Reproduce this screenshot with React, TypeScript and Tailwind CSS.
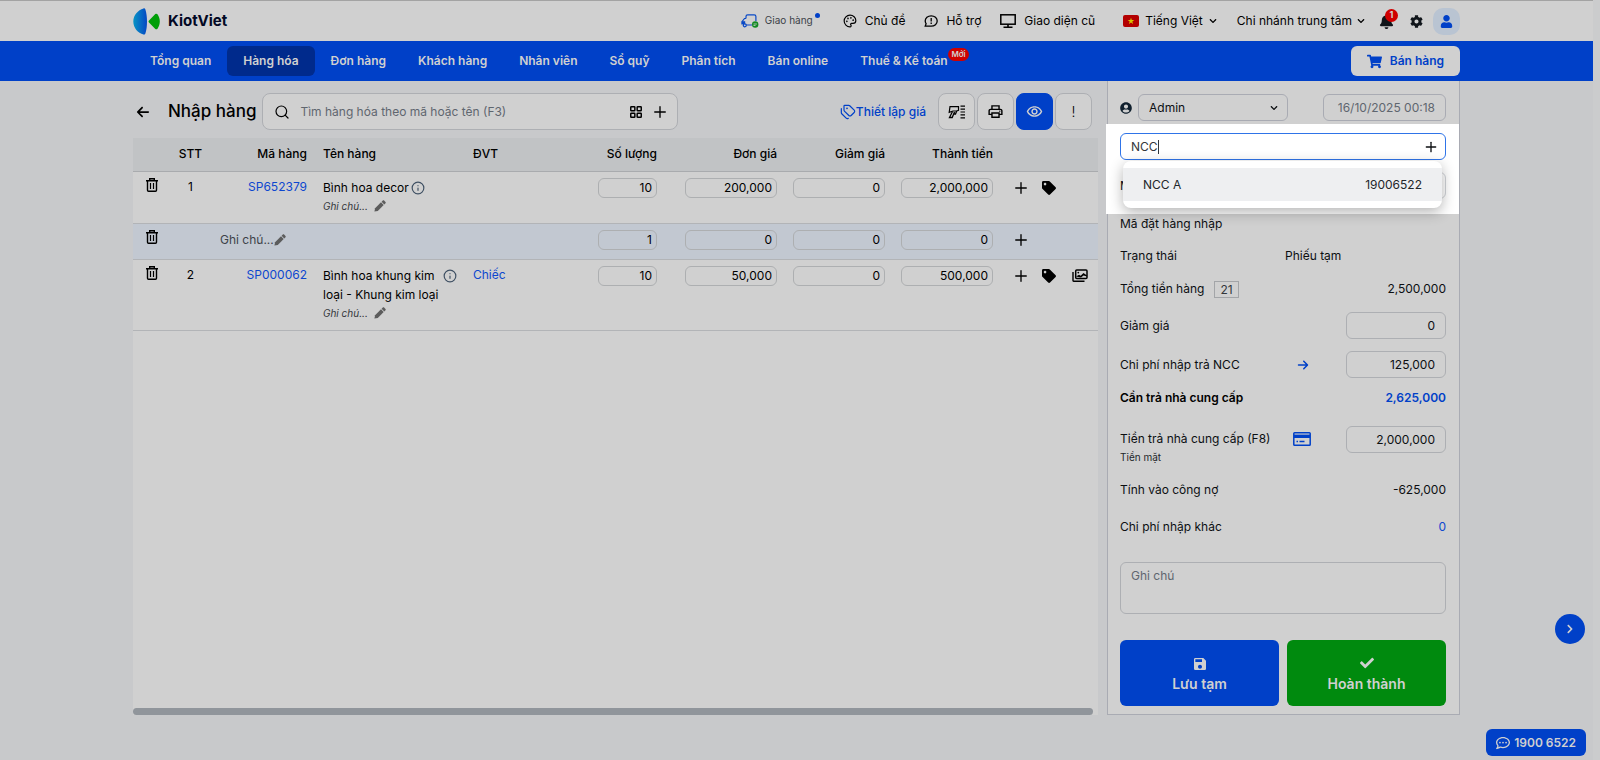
import type { ReactNode } from 'react';
import clsx from 'clsx';
import {
  FaBell,
  FaCheck,
  FaChevronDown,
  FaChevronRight,
  FaCog,
  FaShoppingCart,
  FaTag,
  FaUser,
  FaUserCircle,
} from 'react-icons/fa';
import { FaArrowLeft, FaArrowRight, FaRegCommentDots } from 'react-icons/fa6';
import { MdOutlinePrint, MdOutlineRemoveRedEye, MdSave } from 'react-icons/md';
import { Info, LayoutGrid, Palette, Plus, Search, Tags } from 'lucide-react';

const navItems = [
  { label: 'Tổng quan' },
  { label: 'Hàng hóa', active: true },
  { label: 'Đơn hàng' },
  { label: 'Khách hàng' },
  { label: 'Nhân viên' },
  { label: 'Sổ quỹ' },
  { label: 'Phân tích' },
  { label: 'Bán online' },
  { label: 'Thuế & Kế toán', badge: 'Mới' },
];

type Line = {
  index?: number;
  code?: string;
  name?: string;
  unit?: string;
  quantity: string;
  price: string;
  discount: string;
  total: string;
  hasImage?: boolean;
};

const lines: Line[] = [
  { index: 1, code: 'SP652379', name: 'Bình hoa decor', quantity: '10', price: '200,000', discount: '0', total: '2,000,000' },
  { quantity: '1', price: '0', discount: '0', total: '0' },
  {
    index: 2,
    code: 'SP000062',
    name: 'Bình hoa khung kim loại - Khung kim loại',
    unit: 'Chiếc',
    quantity: '10',
    price: '50,000',
    discount: '0',
    total: '500,000',
    hasImage: true,
  },
];

function Logo() {
  return (
    <a href="#" className="flex items-center gap-2">
      <svg width="27" height="27" viewBox="0 0 27 27" aria-hidden="true">
        <defs>
          <linearGradient id="logo-blue" x1="0" y1="0" x2="1" y2="0">
            <stop offset="0" stopColor="#0894c4" />
            <stop offset="1" stopColor="#0447c4" />
          </linearGradient>
        </defs>
        <path d="M10.5.4C5 2 .3 7 .3 13.5S5 25 10.500 26.600c.9.2 1.600-.1 1.900-1C13.500 22 14 18 14 13.500s-.5-8.500-1.600-12.100c-.3-.9-1-1.200-1.900-1z" fill="url(#logo-blue)" />
        <path d="M16 12.500l6.300-6.400c.7-.7 1.700-.6 2.200.2C26 8.500 26.800 11 26.800 13.500s-.8 5-2.300 7.200c-.5.800-1.500.9-2.200.2L16 14.500c-.6-.6-.6-1.400 0-2z" fill="#009e08" />
      </svg>
      <span className="text-[15px] font-bold text-[#020824]">KiotViet</span>
    </a>
  );
}

function TruckIcon() {
  return (
    <svg width="18" height="14" viewBox="0 0 18 14" fill="none" aria-hidden="true">
      <path d="M5.500 11h5.500M5 4.500V2.500C5 1.500 5.600.8 6.600.8h6.600c1 0 1.700.7 1.700 1.700V7M5 4.500H3.500L1 7.700v2.800" stroke="#0a49c6" strokeWidth="1.200" />
      <path d="M.8 7.200h3.400v3H.8z" fill="#0a49c6" />
      <circle cx="3.800" cy="11.300" r="1.500" fill="#d0d0d0" stroke="#0a49c6" strokeWidth="1.300" />
      <circle cx="14.200" cy="10.500" r="3.200" fill="#128a22" />
      <path d="M12.500 10h3.400M12.500 11.500h2" stroke="#d0d0d0" strokeWidth=".8" />
    </svg>
  );
}

function SupportIcon() {
  return (
    <svg width="14" height="12" viewBox="0 0 14 12" fill="none" stroke="currentColor" strokeWidth="1.300" aria-hidden="true">
      <path d="M1.200 11.200l.9-2.600A4.600 4.600 0 0 1 1.200 6C1.200 3.200 3.800.8 7.200.8s6 2.400 6 5.200-2.600 5.200-6 5.200H1.200z" />
      <path d="M7.200 3v3.400M7.200 7.600v1.400" />
    </svg>
  );
}

function MonitorIcon() {
  return (
    <svg width="16" height="14" viewBox="0 0 16 14" fill="none" stroke="currentColor" aria-hidden="true">
      <rect x=".8" y=".8" width="14.400" height="9.400" strokeWidth="1.500" />
      <path d="M3.500 13.200h9M8 10v3" strokeWidth="1.600" />
    </svg>
  );
}

function FlagIcon() {
  return (
    <svg width="16" height="12" viewBox="0 0 16 12" aria-hidden="true">
      <rect width="16" height="12" rx="2" fill="#b30000" />
      <path d="M8 2.700l.8 2.400h2.500l-2 1.500.8 2.400L8 7.500 5.900 9l.8-2.400-2-1.500h2.500z" fill="#d9c400" />
    </svg>
  );
}

function ScannerIcon() {
  return (
    <svg width="18" height="14" viewBox="0 0 18 14" fill="none" stroke="currentColor" aria-hidden="true">
      <path d="M2 1.700h8.500v3.600L8.700 6H5L1.200 7.300z" strokeWidth="1.200" />
      <path d="M8.700 6L7.500 9H5.800M4.500 6.500L1.500 12.500h2.700L6.500 7" strokeWidth="1.300" />
      <path d="M12.500 1.200H17M12.500 12.800H17" strokeWidth="1.300" />
      <path d="M12.500 4.100H17M12.500 7H17M12.500 9.900H17" strokeWidth="1.100" />
    </svg>
  );
}

function TrashIcon() {
  return (
    <svg width="12" height="14" viewBox="0 0 12 14" fill="none" stroke="currentColor" aria-hidden="true">
      <path d="M0 2.700h12M3.700 2.500V.8h4.600v1.700" strokeWidth="1.400" />
      <path d="M1.500 3v9.200c0 .6.400 1 1 1h7c.6 0 1-.4 1-1V3" strokeWidth="1.400" />
      <path d="M4.500 5v6M7.500 5v6" strokeWidth="1.200" />
    </svg>
  );
}

function PencilIcon() {
  return (
    <svg width="12" height="12" viewBox="0 0 12 12" fill="#5c5c5c" aria-hidden="true">
      <path d="M.4 11.600l.7-3.400L7 2.300l2.700 2.700-5.900 5.900z" />
      <path d="M7.600 1.700L8.800.5c.4-.4.900-.4 1.300 0l1.400 1.400c.4.4.4.9 0 1.300l-1.200 1.200z" />
    </svg>
  );
}

function GalleryIcon() {
  return (
    <svg width="16" height="13" viewBox="0 0 16 13" fill="none" stroke="currentColor" aria-hidden="true">
      <path d="M1 3v8.500c0 .4.200.7.600.7H12.500" strokeWidth="1.400" />
      <rect x="3.700" y="1" width="11.300" height="8.500" rx="1" strokeWidth="1.500" />
      <path d="M4 7.500l3-1.700 1.700 1L11.500 4 15 6.500V7.500l-3.500-1L9 8.500z" fill="currentColor" stroke="none" />
      <circle cx="6.300" cy="3.600" r=".9" fill="currentColor" stroke="none" />
    </svg>
  );
}

function CardIcon() {
  return (
    <svg width="18" height="14" viewBox="0 0 18 14" fill="none" stroke="currentColor" aria-hidden="true">
      <rect x=".8" y=".8" width="16.400" height="12.400" rx=".8" strokeWidth="1.500" />
      <path d="M1 4.300h16" strokeWidth="3.400" />
      <path d="M3.500 9.500h1.500M6.500 9.500h5" strokeWidth="1.400" />
    </svg>
  );
}

function TopBar() {
  return (
    <header className="border-t border-[#a3a3a3] bg-[#d0d0d0]">
      <div className="mx-auto flex h-10 max-w-[1327px] items-center">
        <Logo />
        <div className="ml-auto flex items-center">
          <a href="#" className="mr-[23px] flex items-center gap-1.5">
            <TruckIcon />
            <span className="text-[10px] text-[#3d4248]">Giao hàng</span>
            <span className="-ml-1 mb-3 size-[5px] rounded-full bg-[#0040c8]" />
          </a>
          <a href="#" className="mr-[19px] flex items-center gap-2">
            <Palette className="size-3.5" />
            Chủ đề
          </a>
          <a href="#" className="mr-[19px] flex items-center gap-2">
            <SupportIcon />
            Hỗ trợ
          </a>
          <a href="#" className="mr-7 flex items-center gap-2">
            <MonitorIcon />
            Giao diện cũ
          </a>
          <button type="button" className="mr-5 flex items-center gap-1.5">
            <FlagIcon />
            Tiếng Việt
            <FaChevronDown className="size-2" />
          </button>
          <button type="button" className="mr-3.5 flex items-center gap-[5px]">
            Chi nhánh trung tâm
            <FaChevronDown className="size-2" />
          </button>
          <button type="button" aria-label="Thông báo" className="relative mr-4">
            <FaBell className="size-[15px] text-[#10151a]" />
            <span className="absolute -top-[5px] left-1.5 flex size-[13px] items-center justify-center rounded-full bg-[#d00000] text-[9px] font-bold text-[#d0d0d0]">
              1
            </span>
          </button>
          <button type="button" aria-label="Cài đặt" className="mr-2.5">
            <FaCog className="size-[13px] text-[#10151a]" />
          </button>
          <button type="button" aria-label="Tài khoản" className="flex size-[27px] items-center justify-center rounded-[10px] bg-[#b9c4d2]">
            <FaUser className="size-[13px] text-[#0040c8]" />
          </button>
        </div>
      </div>
    </header>
  );
}

function NavBar() {
  return (
    <nav className="bg-[#0040c8] text-[#d0d0d0]">
      <div className="mx-auto flex h-10 max-w-[1327px] items-center justify-between">
        <ul className="flex pl-px">
          {navItems.map((item) => (
            <li key={item.label}>
              <a
                href="#"
                className={clsx(
                  'relative flex h-[30px] items-center rounded-md px-4 font-semibold',
                  item.active && 'bg-[#002a8c]',
                )}
              >
                {item.label}
                {item.badge && (
                  <span className="absolute right-[-5px] top-0.5 rounded-full bg-[#d00000] px-[3px] text-[8px] leading-[13px]">
                    {item.badge}
                  </span>
                )}
              </a>
            </li>
          ))}
        </ul>
        <a href="#" className="flex h-[30px] items-center gap-2 rounded-md bg-[#d0d0d0] px-4 font-semibold text-[#0040c8]">
          <FaShoppingCart className="size-[15px]" />
          Bán hàng
        </a>
      </div>
    </nav>
  );
}

function ToolButton({ label, active, children }: { label: string; active?: boolean; children: ReactNode }) {
  return (
    <button
      type="button"
      aria-label={label}
      className={clsx(
        'flex size-[37px] items-center justify-center rounded-lg border',
        active ? 'border-[#0040c8] bg-[#0040c8] text-[#d0d0d0]' : 'border-[#adafb3] bg-[#d0d0d0]',
      )}
    >
      {children}
    </button>
  );
}

function Toolbar() {
  return (
    <div className="flex items-center pb-2 pt-3">
      <a href="#" aria-label="Quay lại" className="ml-[3px] mr-[18px]">
        <FaArrowLeft className="size-3.5" />
      </a>
      <h1 className="mr-1.5 text-[17px] font-medium">Nhập hàng</h1>
      <div className="flex h-[37px] w-[416px] items-center rounded-lg border border-[#adafb3] bg-[#d0d0d0] pl-[11px] pr-2">
        <Search className="size-4" strokeWidth={1.8} />
        <input
          type="text"
          aria-label="Tìm hàng hóa"
          placeholder="Tìm hàng hóa theo mã hoặc tên (F3)"
          className="ml-2.5 min-w-0 flex-1 outline-none placeholder:text-[#5f666f]"
        />
        <button type="button" aria-label="Danh mục">
          <LayoutGrid className="size-3.5" strokeWidth={2.5} />
        </button>
        <button type="button" aria-label="Thêm hàng hóa" className="ml-2">
          <Plus className="size-[18px]" strokeWidth={1.8} />
        </button>
      </div>
      <div className="ml-auto flex items-center gap-0.5 pr-1.5">
        <a href="#" className="mr-2.5 flex items-center font-medium text-[#0040c8]">
          <Tags className="size-4" strokeWidth={1.8} />
          Thiết lập giá
        </a>
        <ToolButton label="Quét mã">
          <ScannerIcon />
        </ToolButton>
        <ToolButton label="In">
          <MdOutlinePrint className="size-[17px]" />
        </ToolButton>
        <ToolButton label="Hiển thị" active>
          <MdOutlineRemoveRedEye className="size-[17px]" />
        </ToolButton>
        <ToolButton label="Trợ giúp">
          <span className="text-sm font-light">!</span>
        </ToolButton>
      </div>
    </div>
  );
}

function NumberCell({ label, value, className }: { label: string; value: string; className?: string }) {
  return (
    <td className={clsx('pr-2 pt-1.5 align-top', className ?? 'pl-2')}>
      <input
        type="text"
        aria-label={label}
        defaultValue={value}
        className="block h-5 w-full rounded-md border border-[#adafb1] px-1 text-right outline-none"
      />
    </td>
  );
}

function LineRow({ line }: { line: Line }) {
  const blank = !line.code;
  return (
    <tr className={clsx('border-b border-[#b2b4b7]', blank ? 'h-9 bg-[#c2c8d1]' : 'bg-[#d0d0d0]')}>
      <td className="pt-1.5 align-top">
        <button type="button" aria-label="Xóa" className="mx-auto block">
          <TrashIcon />
        </button>
      </td>
      {blank ? (
        <td colSpan={4} className="pt-2 align-top">
          <div className="flex items-center pl-[50px] text-[#3d4248]">
            Ghi chú...
            <PencilIcon />
          </div>
        </td>
      ) : (
        <>
          <td className="pt-[7px] text-center align-top">{line.index}</td>
          <td className="px-2 pt-[7px] text-right align-top">
            <a href="#" className="text-[#0d47cf]">
              {line.code}
            </a>
          </td>
          <td className="pb-[7px] pl-2 pt-1.5 align-top">
            <div className="flex items-start gap-0.5">
              <span className="max-w-[118px] leading-[19px]">{line.name}</span>
              <Info className="mt-[3px] size-3.5 shrink-0 text-[#3f5063]" />
            </div>
            <div className="flex items-center gap-1.5 text-[10px] italic leading-[19px] text-[#33373b]">
              Ghi chú...
              <PencilIcon />
            </div>
          </td>
          <td className="px-2 pt-[7px] align-top">
            {line.unit && (
              <a href="#" className="text-[#0d47cf]">
                {line.unit}
              </a>
            )}
          </td>
        </>
      )}
      <NumberCell label="Số lượng" value={line.quantity} />
      <NumberCell label="Đơn giá" value={line.price} className="pl-5" />
      <NumberCell label="Giảm giá" value={line.discount} />
      <NumberCell label="Thành tiền" value={line.total} />
      <td className="pl-[11px] pt-[7px] align-top">
        <div className="flex items-center gap-3">
          <button type="button" aria-label="Thêm dòng">
            <Plus className="size-[18px]" strokeWidth={1.8} />
          </button>
          {!blank && (
            <button type="button" aria-label="Nhãn">
              <FaTag className="size-3.5" />
            </button>
          )}
          {line.hasImage && (
            <button type="button" aria-label="Hình ảnh" className="ml-1">
              <GalleryIcon />
            </button>
          )}
        </div>
      </td>
    </tr>
  );
}

function LinesTable() {
  return (
    <div className="flex flex-1 flex-col bg-[#d0d0d0]">
      <table className="w-full table-fixed">
        <colgroup>
          <col className="w-[37px]" />
          <col className="w-[41px]" />
          <col className="w-[104px]" />
          <col className="w-[150px]" />
          <col />
          <col className="w-[75px]" />
          <col className="w-[120px]" />
          <col className="w-[108px]" />
          <col className="w-[108px]" />
          <col className="w-[97px]" />
        </colgroup>
        <thead>
          <tr className="h-[33px] border-b border-[#a9abae] bg-[#c1c3c5] text-right">
            <th />
            <th className="text-center font-medium">STT</th>
            <th className="px-2 font-medium">Mã hàng</th>
            <th className="px-2 text-left font-medium">Tên hàng</th>
            <th className="px-2 text-left font-medium">ĐVT</th>
            <th className="whitespace-nowrap px-2 font-medium">Số lượng</th>
            <th className="px-2 font-medium">Đơn giá</th>
            <th className="px-2 font-medium">Giảm giá</th>
            <th className="px-2 font-medium">Thành tiền</th>
            <th />
          </tr>
        </thead>
        <tbody>
          {lines.map((line, i) => (
            <LineRow key={i} line={line} />
          ))}
        </tbody>
      </table>
      <div className="mt-auto mr-[5px] h-[7px] rounded-full bg-[#90959b]" />
    </div>
  );
}

function AmountInput({ id, value }: { id: string; value: string }) {
  return (
    <input
      id={id}
      type="text"
      defaultValue={value}
      className="h-[27px] w-[100px] rounded-md border border-[#adafb3] px-2.5 text-right outline-none"
    />
  );
}

function SupplierPicker() {
  return (
    <div className="-ml-0.5 h-[90px] bg-white pl-3.5 pr-[13px] pt-[9px]">
      <div className="relative">
        <div className="flex h-[27px] items-center rounded-md border border-[#2f74e8] px-2.5">
          <input
            type="text"
            aria-label="Tìm nhà cung cấp"
            defaultValue="NCC"
            className="field-sizing-content text-[#33373b] outline-none"
          />
          <span className="h-3.5 w-px bg-[#33373b]" />
          <button type="button" aria-label="Thêm nhà cung cấp" className="-mr-1 ml-auto">
            <Plus className="size-4" strokeWidth={2} />
          </button>
        </div>
        <div className="mt-3 flex items-center justify-between">
          <label htmlFor="receipt-code">Mã phiếu nhập</label>
          <input id="receipt-code" type="text" className="h-[27px] w-[164px] rounded-md border border-[#d0d3d8] outline-none" />
        </div>
        <ul className="absolute left-[3px] right-1 top-7 rounded-lg bg-white py-[7px] shadow-[0_4px_14px_rgba(0,0,0,0.3)]">
          <li className="flex h-[33px] items-center justify-between bg-[#eeeff1] px-5 text-[#22262a]">
            <span>NCC A</span>
            <span>19006522</span>
          </li>
        </ul>
      </div>
    </div>
  );
}

function OrderPanel() {
  return (
    <aside className="w-[353px] shrink-0 border border-t-0 border-[#a9abb3] bg-[#d0d0d0] text-[#0c0f12]">
      <div className="flex items-center pb-[3px] pl-3 pr-[13px] pt-[13px]">
        <FaUserCircle className="size-3 text-[#10202e]" />
        <div className="relative ml-1.5 w-[150px]">
          <select
            aria-label="Người nhập"
            className="h-[27px] w-full appearance-none rounded-md border border-[#a9abb3] px-2.5 outline-none"
          >
            <option>Admin</option>
          </select>
          <FaChevronDown className="pointer-events-none absolute right-2.5 top-2.5 size-2" />
        </div>
        <input
          type="text"
          aria-label="Thời gian"
          defaultValue="16/10/2025 00:18"
          className="ml-auto h-[27px] w-[123px] rounded-md border border-[#a9abb3] px-2.5 text-right text-[#5f666f] outline-none"
        />
      </div>
      <SupplierPicker />
      <div className="flex flex-col gap-3 pb-2 pl-3 pr-[13px]">
        <div className="h-5 leading-5">Mã đặt hàng nhập</div>
        <div className="flex h-5 items-center">
          <span className="w-[165px]">Trạng thái</span>
          <span>Phiếu tạm</span>
        </div>
        <div className="flex h-[22px] items-center">
          <span>Tổng tiền hàng</span>
          <span className="ml-2.5 border border-[#a3a5a8] px-[5px] leading-[15px] text-[#33373b]">21</span>
          <span className="ml-auto">2,500,000</span>
        </div>
        <div className="flex items-center justify-between">
          <label htmlFor="discount">Giảm giá</label>
          <AmountInput id="discount" value="0" />
        </div>
        <div className="flex items-center">
          <label htmlFor="supplier-fee">Chi phí nhập trả NCC</label>
          <button type="button" aria-label="Chi tiết chi phí" className="ml-auto mr-[37px] text-[#0040c8]">
            <FaArrowRight className="size-3" />
          </button>
          <AmountInput id="supplier-fee" value="125,000" />
        </div>
        <div className="flex h-4 items-center justify-between font-semibold">
          <span className="text-black">Cần trả nhà cung cấp</span>
          <span className="text-[#0040c8]">2,625,000</span>
        </div>
        <div className="mt-2 flex h-[42px] items-start">
          <div>
            <label htmlFor="paid" className="block leading-[25px]">
              Tiền trả nhà cung cấp (F8)
            </label>
            <div className="text-[10px] leading-3 text-[#22262a]">Tiền mặt</div>
          </div>
          <button type="button" aria-label="Phương thức thanh toán" className="ml-auto mr-[35px] mt-1.5 text-[#0040c8]">
            <CardIcon />
          </button>
          <AmountInput id="paid" value="2,000,000" />
        </div>
        <div className="flex h-5 items-center justify-between">
          <span>Tính vào công nợ</span>
          <span>-625,000</span>
        </div>
        <div className="flex h-[30px] items-center justify-between">
          <span>Chi phí nhập khác</span>
          <a href="#" className="text-[#0d47cf]">
            0
          </a>
        </div>
        <textarea
          aria-label="Ghi chú"
          placeholder="Ghi chú"
          className="mt-2 block h-[52px] resize-none rounded-md border border-[#adafb3] px-2.5 py-[5px] outline-none placeholder:text-[#5f666f]"
        />
        <div className="mt-3.5 grid grid-cols-2 gap-2 text-sm font-semibold text-[#d0d0d0]">
          <button type="button" className="flex h-[66px] flex-col items-center justify-center gap-0.5 rounded-md bg-[#0040c8] pt-1">
            <MdSave className="size-4" />
            Lưu tạm
          </button>
          <button type="button" className="flex h-[66px] flex-col items-center justify-center gap-1 rounded-md bg-[#008a0e] pt-1">
            <FaCheck className="size-3.5" />
            Hoàn thành
          </button>
        </div>
      </div>
    </aside>
  );
}

export default function App() {
  return (
    <div className="flex min-h-screen bg-[#c8c9cb] font-['Inter',sans-serif] text-xs text-black">
      <div className="min-w-0 flex-1">
        <TopBar />
        <NavBar />
        <main className="mx-auto flex max-w-[1327px] gap-[9px]">
          <section className="flex min-w-0 flex-1 flex-col">
            <Toolbar />
            <LinesTable />
          </section>
          <OrderPanel />
        </main>
      </div>
      <div className="w-[7px] bg-[#cbcccd]" />

      <button
        type="button"
        aria-label="Mở rộng"
        className="fixed bottom-[116px] right-[15px] flex size-[30px] items-center justify-center rounded-full bg-[#0040c8] text-[#d0d0d0]"
      >
        <FaChevronRight className="size-2.5" />
      </button>
      <a
        href="tel:19006522"
        className="fixed bottom-1 right-3.5 flex h-[27px] items-center gap-1 rounded-md bg-[#0040c8] px-2.5 font-semibold text-[#d0d0d0]"
      >
        <FaRegCommentDots className="size-3.5" />
        1900 6522
      </a>
    </div>
  );
}
